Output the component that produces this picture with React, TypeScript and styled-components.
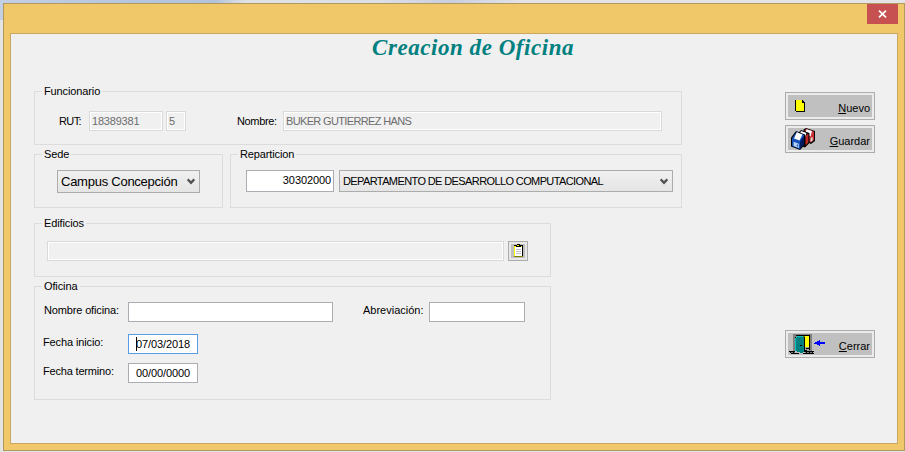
import React from "react";
import styled, { createGlobalStyle } from "styled-components";

const Global = createGlobalStyle`
  *, *::before, *::after { box-sizing: border-box; }
  html, body { margin: 0; padding: 0; }
  body {
    width: 905px; height: 452px; overflow: hidden;
    font-family: "Liberation Sans", Arial, sans-serif;
    font-size: 11px; line-height: 14px; color: #000;
  }
  button, input { font: inherit; color: inherit; border-radius: 0; margin: 0; outline: none; }
`;

const Desktop = styled.div`
  width: 905px;
  height: 452px;
  padding: 3px 0 1px 3px;
  background:
    linear-gradient(90deg, #c3cfe3 0, #b6c6de 130px, #b3c3dc 215px, #dfe1e4 245px, #dcdfe6 380px, #c9cedd 450px, #e3e3e8 520px, #e4e4e6 905px) 0 0 / 905px 20px no-repeat,
    #e4e4e2;
`;

const Window = styled.div`
  display: flex;
  flex-direction: column;
  width: 902px;
  height: 448px;
  background: #f0c869;
  border: 1px solid #b0995f;
  padding: 0 6px 6px;
`;

const TitleBar = styled.div`
  display: flex;
  justify-content: flex-end;
  height: 29px;
  flex: none;
`;

const CloseButton = styled.button`
  display: flex;
  align-items: center;
  justify-content: center;
  width: 31px;
  height: 20px;
  padding: 0;
  border: 0;
  background: #c75050;
`;

const Client = styled.main`
  flex: 1;
  width: 888px;
  border: 1px solid #c9a760;
  background: #f0f0f0;
`;

const Title = styled.h1`
  height: 57px;
  margin: 0;
  padding: 1px 0 0 361px;
  font: italic bold 23px/26px "Liberation Serif", "Times New Roman", serif;
  letter-spacing: 0.55px;
  color: #008080;
  white-space: nowrap;
`;

const Body = styled.div`
  display: flex;
  gap: 103px;
  padding-left: 23px;
`;

const Form = styled.div`
  display: flex;
  flex-direction: column;
  width: 648px;
`;

const GroupRow = styled.div`
  display: flex;
  gap: 7px;
  margin: 9px 0 15px;
`;

const Group = styled.section<{ $w: number; $h: number }>`
  width: ${(p) => p.$w}px;
  height: ${(p) => p.$h}px;
  border: 1px solid #dcdcdc;
`;

const Legend = styled.div<{ $w: number; $ls?: number }>`
  width: ${(p) => p.$w}px;
  height: 14px;
  margin: -8px 0 0 7px;
  padding-left: 2px;
  background: #f0f0f0;
  letter-spacing: ${(p) => p.$ls ?? -0.12}px;
  white-space: nowrap;
`;

const Row = styled.div<{ $top: number; $left: number }>`
  display: flex;
  align-items: flex-start;
  padding: ${(p) => p.$top}px 0 0 ${(p) => p.$left}px;
`;

const Label = styled.label<{ $w: number; $top?: number; $ls?: number }>`
  width: ${(p) => p.$w}px;
  padding-top: ${(p) => p.$top ?? 3}px;
  letter-spacing: ${(p) => p.$ls ?? 0}px;
  white-space: nowrap;
  flex: none;
`;

const Field = styled.input<{ $w: number; $h?: number; $ml?: number; $ls?: number; $pad?: string }>`
  width: ${(p) => p.$w}px;
  height: ${(p) => p.$h ?? 20}px;
  margin-left: ${(p) => p.$ml ?? 0}px;
  padding: ${(p) => p.$pad ?? "0 2px"};
  border: 1px solid #abadb3;
  background: #fff;
  letter-spacing: ${(p) => p.$ls ?? 0}px;
  flex: none;
`;

const CodeField = styled(Field)`
  text-align: right;
`;

const LockedField = styled(Field)`
  border-color: #d9d9d9;
  background: #f0f0f0;
  box-shadow: inset 0 0 0 1px #fff;
  color: #6d6d6d;
`;

const DateWrap = styled.div<{ $active?: boolean }>`
  display: flex;
  align-items: center;
  width: 70px;
  height: 20px;
  padding: 0 0 0 7px;
  border: 1px solid ${(p) => (p.$active ? "#569de5" : "#abadb3")};
  background: #fff;
  letter-spacing: -0.1px;
  white-space: nowrap;
`;

const Caret = styled.span`
  width: 1px;
  height: 14px;
  margin: -1px -1px 0 0;
  background: #000;
`;

const Combo = styled.button<{ $w: number; $h: number; $size?: number; $ml?: number; $ls?: number; $pl: number }>`
  display: flex;
  align-items: center;
  justify-content: space-between;
  width: ${(p) => p.$w}px;
  height: ${(p) => p.$h}px;
  margin-left: ${(p) => p.$ml ?? 0}px;
  padding: 0 4px 0 ${(p) => p.$pl}px;
  border: 1px solid #acacac;
  background: linear-gradient(#f0f0f0, #e5e5e5);
  font-size: ${(p) => p.$size ?? 11}px;
  letter-spacing: ${(p) => p.$ls ?? 0}px;
  white-space: nowrap;
  flex: none;
`;

const PickButton = styled.button`
  display: flex;
  width: 20px;
  height: 20px;
  margin-left: 4px;
  padding: 2px;
  border: 1px solid #acacac;
  background: #e8e8e8;
`;

const Actions = styled.div`
  display: flex;
  flex-direction: column;
  width: 90px;
  gap: 5px;
  padding-top: 1px;
`;

const Action = styled.button<{ $mt?: number }>`
  display: flex;
  justify-content: space-between;
  width: 90px;
  height: 28px;
  margin-top: ${(p) => p.$mt ?? 0}px;
  padding: 2px;
  border: 1px solid #acacac;
  background: #ebebeb;
`;

const ActionFace = styled.span`
  display: flex;
  justify-content: space-between;
  width: 84px;
  height: 22px;
  background: #c0c0c0;
`;

const ActionText = styled.span`
  padding: 6px 2px 0 0;
`;

const Mnemonic = styled.span`
  text-decoration: underline;
  text-underline-offset: 1px;
  text-decoration-thickness: 1px;
`;

const Glyph = styled.svg`
  display: block;
  flex: none;
`;

const Chevron = () => (
  <Glyph width="8" height="7" viewBox="0 0 8 7">
    <path d="M0.7 1.4 L4 4.8 L7.3 1.4" fill="none" stroke="#505050" strokeWidth="2.3" />
  </Glyph>
);

const CloseIcon = () => (
  <Glyph width="9" height="8" viewBox="0 0 9 8">
    <path d="M1 0.6 L8 7.4 M8 0.6 L1 7.4" stroke="#fff" strokeWidth="1.7" />
  </Glyph>
);

const ClipboardIcon = () => (
  <Glyph width="14" height="14" viewBox="0 0 14 14" shapeRendering="crispEdges">
    <path fill="#c0c0c0" d="M0 0h14v14H0z" />
    <path fill="#ff0" d="M3 1h8v12H3z" />
    <path fill="#808000" d="M3 12h9v1H3z" />
    <path fill="#fff" d="M4 3h7v9H4z" />
    <path fill="#c0c0c0" d="M5 5h5v1H5zM5 7h5v1H5zM5 9h5v1H5z" />
    <path fill="#000" d="M3 1h3v1H3zM6 0h3v1H6zM8 1h4v1H8zM11 2h1v10h-1zM5 2h5v1H5z" />
    <path fill="#ff0" d="M6 1h2v1H6z" />
  </Glyph>
);

const NewIcon = () => (
  <Glyph width="36" height="22" viewBox="0 0 36 22" shapeRendering="crispEdges">
    <path fill="#ff0" d="M8 5h6v3h2v8H8z" />
    <path fill="#000" d="M7 5h1v11H7zM8 16h9v1H8zM16 8h1v8h-1zM14 5h1v3h-1zM15 6h1v2h-1zM16 7h1v1h-1z" />
  </Glyph>
);

const SaveIcon = () => (
  <Glyph width="36" height="22" viewBox="0 0 36 22">
    <path fill="#000" d="M15.5 1.5 L18 0 L27 3 V13 L23 16 L15.5 12z" />
    <path fill="#c83232" d="M16.5 2 L18.5 1 L26 3.5 V12 L23 14.5 L21 13.5 V8z" />
    <path fill="#fff" d="M18.5 1.2 L24 3 L22.5 8.5 L17 6.5z" />
    <path fill="#d8d8d8" d="M22.6 9.8 L24.6 9.2 V12.8 L22.6 14z" />
    <path fill="#000" d="M9.5 6 L13 2 L21.5 5 V15 L17 19.5 L9.5 17z" />
    <path fill="#c02828" d="M17.5 8 L20.4 5.6 V14.5 L17.5 17.5z" />
    <path fill="#fff" d="M13 3 L18.5 5 L16.5 10 L11 8z" />
    <path fill="#000" d="M3 9.5 L8 3 L17 6.5 V16.5 L12 22 L3 18.5z" />
    <path fill="#1450b8" d="M4 10 L8.5 4 L16 7 V16 L11.6 21 L4 18z" />
    <path fill="#001860" d="M12 13.5 L16 8 V16 L12 20.5z" />
    <path fill="#fff" d="M8.8 4.3 L14.5 6.5 L11.5 12.5 L6 10.5z" />
    <path fill="#b8d4f4" d="M5.6 13.8 L10.8 15.8 V20 L5.6 18z" />
    <path fill="#1450b8" d="M8.8 16.2 L10 16.7 V18.7 L8.8 18.2z" />
  </Glyph>
);

const ExitIcon = () => (
  <Glyph width="40" height="22" viewBox="0 0 40 22" shapeRendering="crispEdges">
    <path fill="#808080" d="M5 1h19v17H5z" />
    <path fill="#000" d="M8 2h14v1H8zM21 2h1v15h-1zM7 4h1v14H7z" />
    <path fill="#ff0" d="M9 3h12v11h-4V6H9z" />
    <path fill="#808000" d="M9 3h8v1H9z" />
    <path fill="#a0a0a0" d="M17 14h4v4h-4z" />
    <path fill="#000" d="M18 15h3v1h-3zM17 17h2v1h-2z" />
    <path fill="#008080" d="M7 5l2-1h7v15l-2 1-7-2z" />
    <path fill="#00c0c0" d="M7 5l2-2h6v1H9v1zM7 5h1v13H7z" />
    <path fill="#000" d="M16 4h1v15h-1zM12 12h2v1h-2z" />
    <path fill="#000" d="M1 18h6v1H1zM3 20h8v1H3zM17 18h9v1h-9zM15 20h11v1H15z" />
    <path fill="#808080" d="M2 19h5v1H2zM17 19h8v1h-8z" />
    <path fill="#000" d="M2 19h1v1H2zM5 19h1v1H5zM18 19h1v1h-1zM21 19h1v1h-1zM24 19h1v1h-1z" />
    <path fill="#00f" d="M26 10h1V9h2V8h2V7h1v2h5v2h-5v2h-1v-1h-2v-1h-3z" />
  </Glyph>
);

export default function App() {
  return (
    <>
      <Global />
      <Desktop>
        <Window>
          <TitleBar>
            <CloseButton aria-label="Cerrar ventana"><CloseIcon /></CloseButton>
          </TitleBar>
          <Client>
            <Title>Creacion de Oficina</Title>
            <Body>
              <Form>
                <Group $w={648} $h={54}>
                  <Legend $w={60}>Funcionario</Legend>
                  <Row $top={13} $left={24}>
                    <Label $w={30} $ls={-0.6}>RUT:</Label>
                    <LockedField $w={74} $ls={-0.2} readOnly value="18389381" />
                    <LockedField $w={20} $ml={3} readOnly value="5" />
                    <Row $top={0} $left={51}>
                      <Label $w={46} $ls={-0.35}>Nombre:</Label>
                      <LockedField $w={379} $ls={-0.65} readOnly value="BUKER GUTIERREZ HANS" />
                    </Row>
                  </Row>
                </Group>
                <GroupRow>
                  <Group $w={189} $h={54}>
                    <Legend $w={29}>Sede</Legend>
                    <Row $top={9} $left={22}>
                      <Combo $w={143} $h={23} $size={13} $pl={3} $ls={-0.25}>Campus Concepción<Chevron /></Combo>
                    </Row>
                  </Group>
                  <Group $w={452} $h={54}>
                    <Legend $w={58}>Reparticion</Legend>
                    <Row $top={9} $left={15}>
                      <CodeField $w={88} $h={22} $ls={-0.1} $pad="0 2px 2px" readOnly value="30302000" />
                      <Combo $w={334} $h={22} $ml={5} $pl={3} $ls={-0.61}>
                        DEPARTAMENTO DE DESARROLLO COMPUTACIONAL<Chevron />
                      </Combo>
                    </Row>
                  </Group>
                </GroupRow>
                <Group $w={517} $h={54}>
                  <Legend $w={44}>Edificios</Legend>
                  <Row $top={11} $left={12}>
                    <LockedField $w={457} readOnly value="" />
                    <PickButton aria-label="Buscar edificio"><ClipboardIcon /></PickButton>
                  </Row>
                </Group>
                <GroupRow>
                  <Group $w={517} $h={114}>
                    <Legend $w={38}>Oficina</Legend>
                    <Row $top={9} $left={9}>
                      <Label $w={84} $top={1} $ls={-0.15}>Nombre oficina:</Label>
                      <Field $w={205} readOnly value="" />
                      <Row $top={0} $left={30}>
                        <Label $w={66} $top={1}>Abreviación:</Label>
                        <Field $w={96} readOnly value="" />
                      </Row>
                    </Row>
                    <Row $top={12} $left={8}>
                      <Label $w={85} $top={1} $ls={-0.12}>Fecha inicio:</Label>
                      <DateWrap $active><Caret />07/03/2018</DateWrap>
                    </Row>
                    <Row $top={9} $left={8}>
                      <Label $w={85} $top={1} $ls={-0.18}>Fecha termino:</Label>
                      <DateWrap>00/00/0000</DateWrap>
                    </Row>
                  </Group>
                </GroupRow>
              </Form>
              <Actions>
                <Action>
                  <ActionFace><NewIcon /><ActionText><Mnemonic>N</Mnemonic>uevo</ActionText></ActionFace>
                </Action>
                <Action>
                  <ActionFace><SaveIcon /><ActionText><Mnemonic>G</Mnemonic>uardar</ActionText></ActionFace>
                </Action>
                <Action $mt={172}>
                  <ActionFace><ExitIcon /><ActionText><Mnemonic>C</Mnemonic>errar</ActionText></ActionFace>
                </Action>
              </Actions>
            </Body>
          </Client>
        </Window>
      </Desktop>
    </>
  );
}
